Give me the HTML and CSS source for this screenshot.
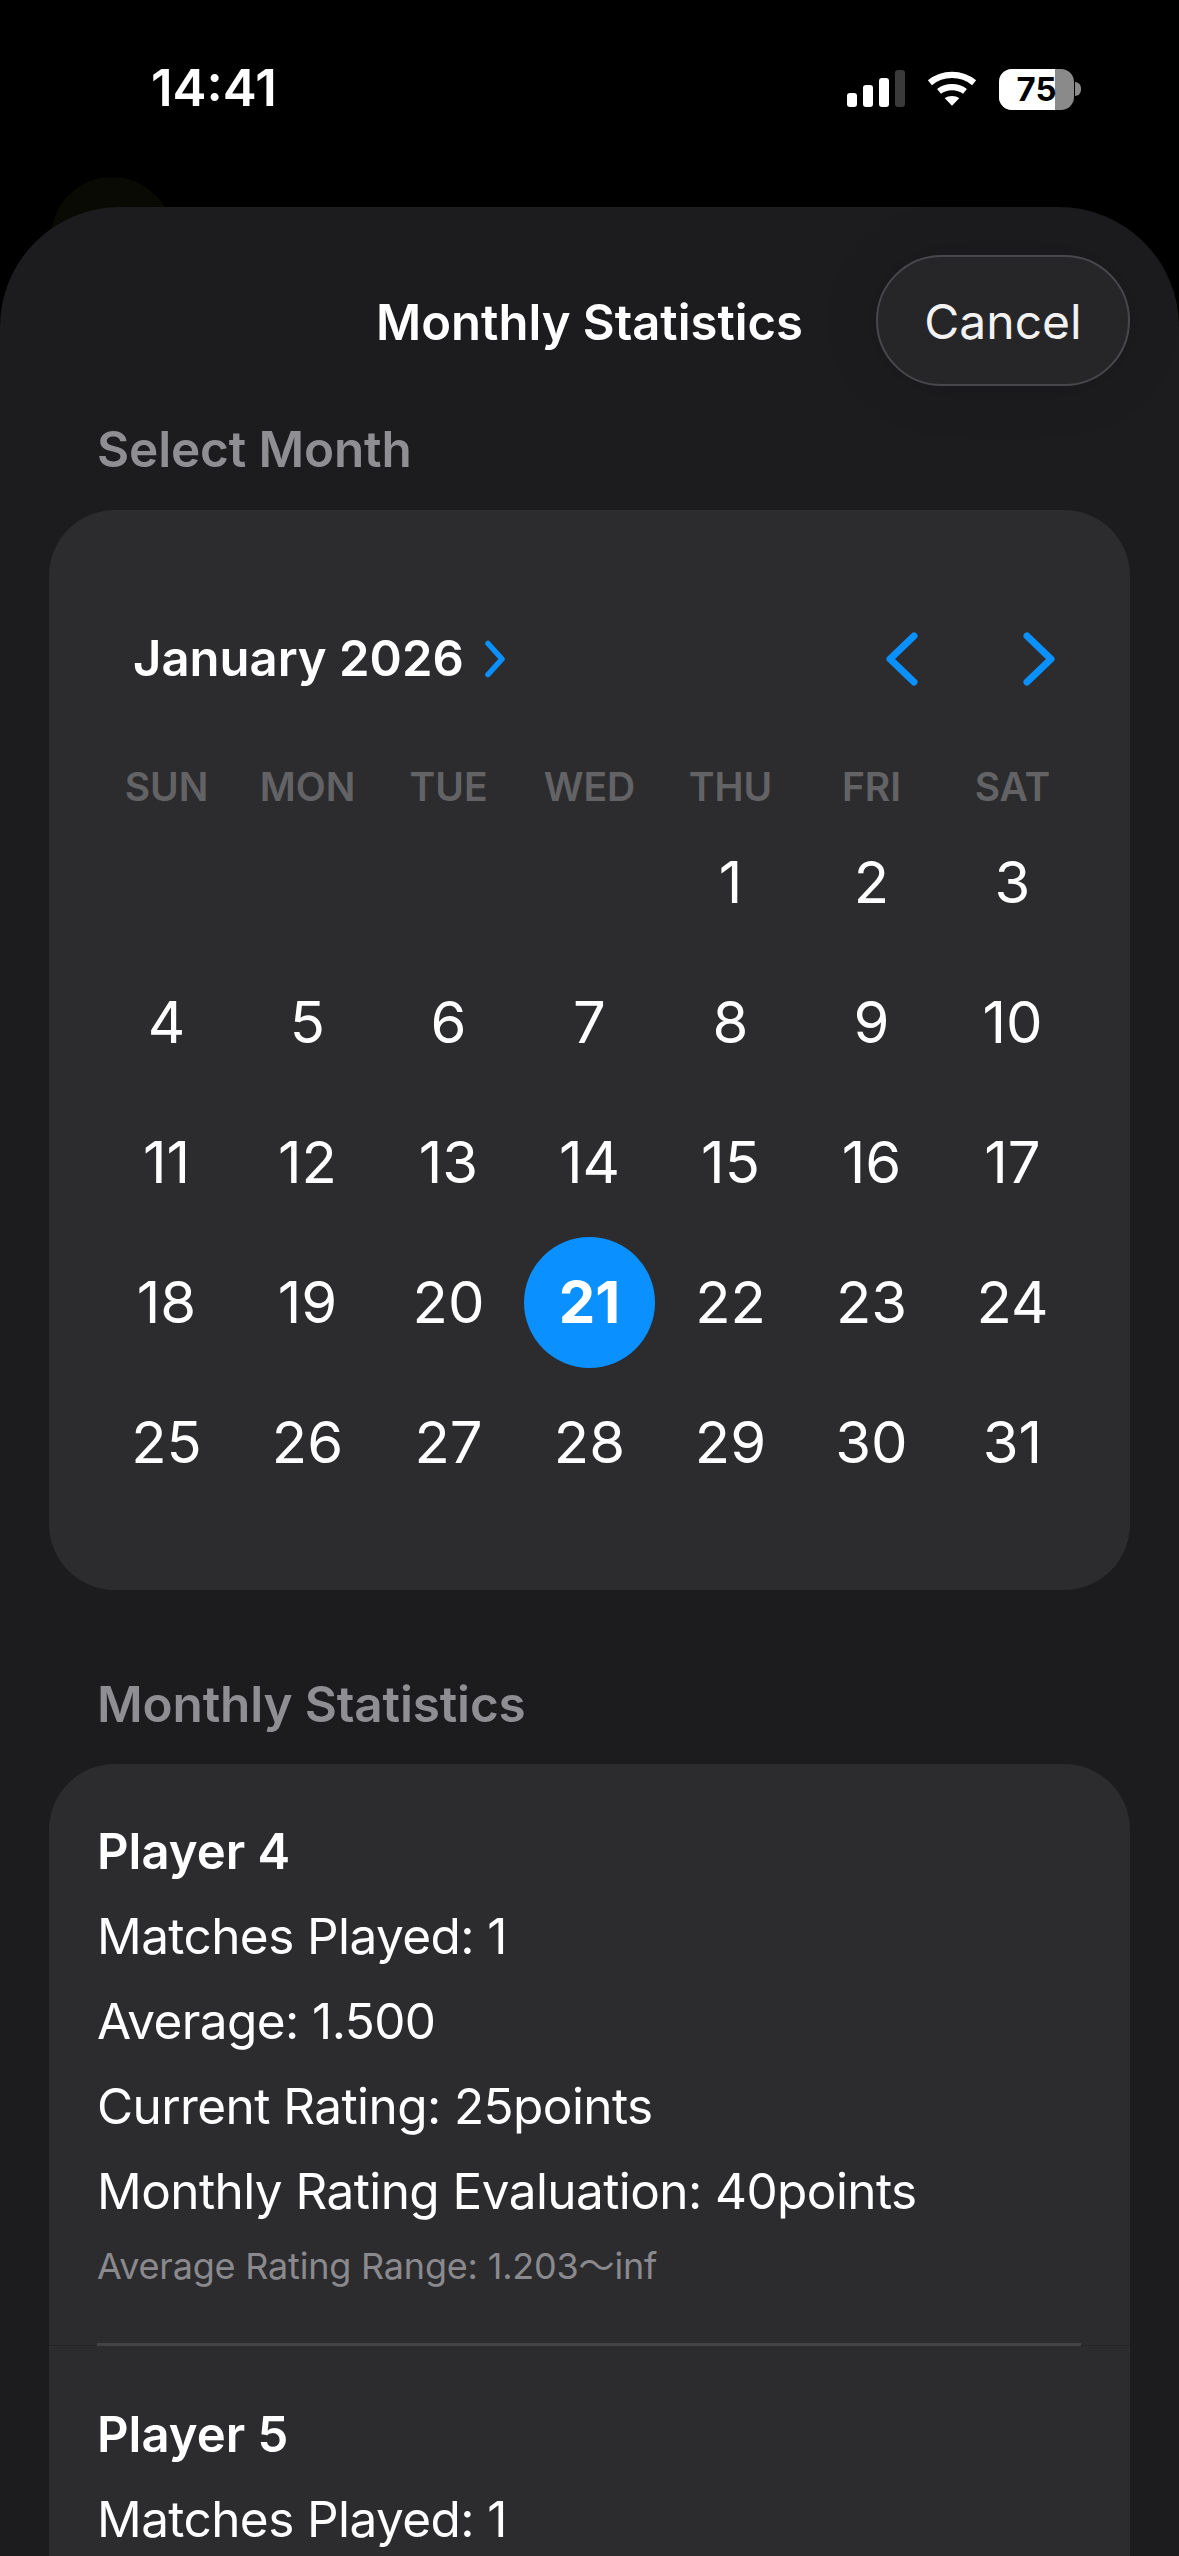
FILE: index.html
```html
<!DOCTYPE html>
<html lang="en">
<head>
<meta charset="utf-8">
<title>Monthly Statistics</title>
<link rel="stylesheet" href="styles.css">
</head>
<body>
<div class="screen">
  <div class="blob"></div>
  <header class="status">
    <span class="time">14:41</span>
    <div class="status-icons">
      <svg class="signal" width="58" height="38" viewBox="0 0 58 38"><rect x="0" y="23" width="10" height="14" rx="3" fill="#fff"/><rect x="16" y="15" width="10" height="22" rx="3" fill="#fff"/><rect x="32" y="8" width="10" height="29" rx="3" fill="#fff"/><rect x="48" y="0" width="10" height="37" rx="3" fill="#3a3a3a"/></svg>
      <svg class="wifi" width="50" height="38" viewBox="0 0 52 38"><path d="M3 12.5C16 1.5 36 1.5 49 12.5" fill="none" stroke="#fff" stroke-width="6.5" stroke-linecap="butt"/><path d="M12.5 21.5C20 15.5 32 15.5 39.5 21.5" fill="none" stroke="#fff" stroke-width="6.5"/><path d="M26 36.5L18.5 28.5C22.5 25.5 29.5 25.5 33.5 28.5Z" fill="#fff"/></svg>
      <div class="battery">
        <div class="battery-body"><span class="battery-level"></span><span class="battery-text">75</span></div>
        <span class="battery-tip"></span>
      </div>
    </div>
  </header>
  <main class="sheet">
    <div class="nav">
      <h1 class="nav-title">Monthly Statistics</h1>
      <button class="cancel">Cancel</button>
    </div>
    <h2 class="section-label label-first">Select Month</h2>
    <section class="card calendar">
      <div class="cal-head">
        <div class="cal-month">
          <span>January 2026</span>
          <svg width="22" height="38" viewBox="0 0 22 38"><path d="M4 3.5L18 19L4 34.5" fill="none" stroke="#0a91ff" stroke-width="5.5" stroke-linecap="round" stroke-linejoin="round"/></svg>
        </div>
        <div class="cal-arrows">
          <svg width="36" height="54" viewBox="0 0 36 54"><path d="M30 4L6 27L30 50" fill="none" stroke="#0a91ff" stroke-width="7" stroke-linecap="round" stroke-linejoin="round"/></svg>
          <svg width="36" height="54" viewBox="0 0 36 54"><path d="M6 4L30 27L6 50" fill="none" stroke="#0a91ff" stroke-width="7" stroke-linecap="round" stroke-linejoin="round"/></svg>
        </div>
      </div>
      <div class="weekdays">
        <span>SUN</span><span>MON</span><span>TUE</span><span>WED</span><span>THU</span><span>FRI</span><span>SAT</span>
      </div>
      <div class="days">
        <span></span><span></span><span></span><span></span><span>1</span><span>2</span><span>3</span>
        <span>4</span><span>5</span><span>6</span><span>7</span><span>8</span><span>9</span><span>10</span>
        <span>11</span><span>12</span><span>13</span><span>14</span><span>15</span><span>16</span><span>17</span>
        <span>18</span><span>19</span><span>20</span><span class="today">21</span><span>22</span><span>23</span><span>24</span>
        <span>25</span><span>26</span><span>27</span><span>28</span><span>29</span><span>30</span><span>31</span>
      </div>
    </section>
    <h2 class="section-label label-second">Monthly Statistics</h2>
    <section class="card stats">
      <article class="player">
        <h3 class="player-name">Player 4</h3>
        <p class="line">Matches Played: 1</p>
        <p class="line">Average: 1.500</p>
        <p class="line">Current Rating: 25points</p>
        <p class="line">Monthly Rating Evaluation: 40points</p>
        <p class="range">Average Rating Range: 1.203～inf</p>
      </article>
      <div class="divider"></div>
      <article class="player">
        <h3 class="player-name">Player 5</h3>
        <p class="line">Matches Played: 1</p>
      </article>
    </section>
  </main>
</div>
</body>
</html>
```
FILE: styles.css
```css
* { box-sizing: border-box; margin: 0; padding: 0; }
html, body { background: #000; }
body { font-family: Inter, "Noto Sans CJK JP", sans-serif; color: #fff; }
.screen { position: relative; width: 1179px; height: 2556px; overflow: hidden; background: #000; display: flex; flex-direction: column; }
.blob { position: absolute; left: 51px; top: 177px; width: 122px; height: 122px; border-radius: 50%; background: #0a0a04; }
.status { position: relative; height: 207px; padding: 63px 98px 0 151px; display: flex; justify-content: space-between; align-items: flex-start; }
.time { font-size: 51px; line-height: 50px; font-weight: 600; }
.status-icons { display: flex; align-items: center; gap: 22px; height: 50px; padding-top: 2px; }
.battery { display: flex; align-items: center; gap: 1px; }
.battery-body { position: relative; width: 75px; height: 41px; border-radius: 13px; background: #8a8a8a; overflow: hidden; display: flex; align-items: center; justify-content: center; }
.battery-level { position: absolute; left: 0; top: 0; bottom: 0; width: 56px; background: #fff; }
.battery-text { position: relative; color: #000; font-size: 33px; line-height: 41px; font-weight: 700; }
.battery-tip { width: 6px; height: 14px; border-radius: 0 7px 7px 0; background: #8a8a8a; }
.sheet { position: relative; flex: 1; background: #1c1c1e; border-radius: 120px 120px 0 0; padding: 48px 49px 0; overflow: hidden; }
.nav { position: relative; height: 131px; display: flex; align-items: center; justify-content: flex-end; }
.nav-title { position: absolute; left: 0; right: 0; top: 38px; text-align: center; font-size: 49px; line-height: 60px; font-weight: 600; }
.cancel { width: 254px; height: 131px; padding-top: 2px; border-radius: 66px; border: 2px solid #48484c; background: #262628; color: #f2f2f2; font: 400 48px/60px Inter, sans-serif; box-shadow: 0 0 60px rgba(0,0,0,.12); position: relative; }
.section-label { padding-left: 48px; font-size: 49.5px; line-height: 60px; font-weight: 600; color: #8e8e93; letter-spacing: -.15px; }
.label-first { margin-top: 33px; }
.label-second { margin-top: 84px; }
.card { background: #2c2c2e; border-radius: 66px; }
.calendar { margin-top: 31px; height: 1080px; padding: 114px 0 0 47px; }
.cal-head { display: flex; align-items: center; justify-content: space-between; height: 70px; padding: 0 73px 0 37px; }
.cal-month { display: flex; align-items: center; gap: 20px; font-size: 49px; line-height: 70px; font-weight: 600; }
.cal-arrows { display: flex; gap: 101px; }
.weekdays { display: grid; grid-template-columns: repeat(7, 141px); margin-top: 70px; }
.weekdays span { text-align: center; font-size: 39px; line-height: 46px; font-weight: 600; color: #636366; }
.days { display: grid; grid-template-columns: repeat(7, 141px); grid-auto-rows: 140px; margin-top: 2px; }
.days span { display: flex; align-items: center; justify-content: center; font-size: 58px; font-weight: 400; }
.days .today { width: 131px; height: 131px; margin: 4.5px 5px; border-radius: 50%; background: #0a91ff; font-weight: 700; }
.stats { margin-top: 30px; height: 900px; padding: 58px 49px 0 48px; }
.player-name { font-size: 49px; line-height: 60px; font-weight: 600; }
.line { margin-top: 25px; font-size: 49.5px; line-height: 60px; font-weight: 400; letter-spacing: -.58px; }
.player-name + .line { margin-top: 23.5px; }
.range { margin-top: 24.5px; font-size: 36px; line-height: 42px; color: #8a8a8e; letter-spacing: -.2px; }
.divider { position: relative; height: 3px; margin: 56px 0 59px; background: #434346; }
.divider::before { content: ""; position: absolute; left: -48px; right: -49px; bottom: 0; height: 1px; background: #232325; }
.divider::after { content: ""; position: absolute; inset: 0; background: #434346; }
```
